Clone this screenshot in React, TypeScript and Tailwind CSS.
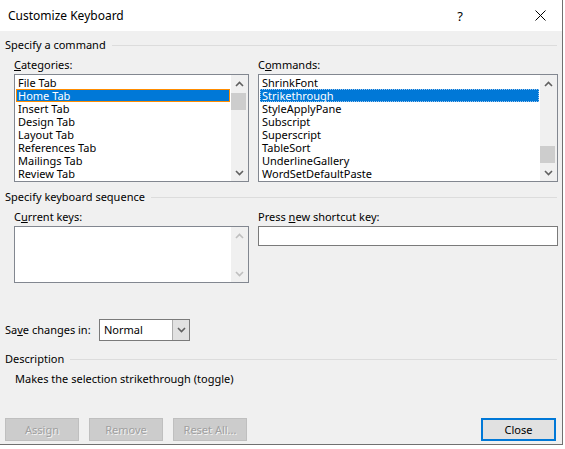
import React from 'react';

const categories = ['File Tab', 'Home Tab', 'Insert Tab', 'Design Tab', 'Layout Tab', 'References Tab', 'Mailings Tab', 'Review Tab'];
const commands = ['ShrinkFont', 'Strikethrough', 'StyleApplyPane', 'Subscript', 'Superscript', 'TableSort', 'UnderlineGallery', 'WordSetDefaultPaste'];

function Chevron({ up, color = '#606060' }: { up?: boolean; color?: string }) {
  return (
    <svg width="9" height="6" viewBox="0 0 9 6">
      <path d={up ? 'M1 5 L4.5 1.5 L8 5' : 'M1 1 L4.5 4.5 L8 1'} fill="none" stroke={color} strokeWidth="1.6" />
    </svg>
  );
}

function GroupHeader({ title, className }: { title: string; className?: string }) {
  return (
    <div className={`flex items-center h-4 ${className ?? ''}`}>
      <span className="pr-[6px]">{title}</span>
      <div className="flex-1 h-px bg-[#dcdcdc]" />
    </div>
  );
}

function Scrollbar({ thumbTop, disabled }: { thumbTop?: number; disabled?: boolean }) {
  const c = disabled ? '#bfbfbf' : '#606060';
  return (
    <div className="w-[17px] bg-[#f0f0f0] flex flex-col relative">
      <div className="h-[17px] flex items-center justify-center"><Chevron up color={c} /></div>
      <div className="flex-1" />
      <div className="h-[17px] flex items-center justify-center"><Chevron color={c} /></div>
      {thumbTop !== undefined && (
        <div className="absolute left-0 w-[15px] h-[17px] bg-[#cdcdcd]" style={{ top: thumbTop }} />
      )}
    </div>
  );
}

function ListBox({ items, selected, focus, thumbTop, width }: { items: string[]; selected: number; focus: 'solid' | 'dotted'; thumbTop: number; width: string }) {
  return (
    <div className={`${width} h-[108px] border border-[#828790] bg-white flex`}>
      <div className="flex-1 pt-px pl-px pr-px overflow-hidden">
        {items.map((item, i) => (
          <div
            key={item}
            className={
              i === selected
                ? focus === 'solid'
                  ? 'h-[13px] leading-[11px] pl-[1px] bg-[#0078d7] text-white border border-[#ff8c00]'
                  : 'h-[13px] leading-[11px] pl-[1px] bg-[#0078d7] text-white border border-dotted border-[#9fc6ee]'
                : 'h-[13px] leading-[13px] pl-[2px]'
            }
          >
            {item}
          </div>
        ))}
      </div>
      <Scrollbar thumbTop={thumbTop} />
    </div>
  );
}

function Btn({ label, primary }: { label: string; primary?: boolean }) {
  return primary ? (
    <div className="w-[75px] h-[23px] border-2 border-[#0078d7] bg-[#e1e1e1] flex items-center justify-center">{label}</div>
  ) : (
    <div className="w-[74px] h-[23px] border border-[#bfbfbf] bg-[#cccccc] flex items-center justify-center text-[#a0a0a0] [text-shadow:1px_1px_0_#f4f4f4]">{label}</div>
  );
}

export default function App() {
  return (
    <div className="w-[565px] h-[449px] bg-white text-[11px] leading-4 text-black font-['Segoe_UI','Noto_Sans',sans-serif] overflow-hidden">
      <div className="w-[563px] h-[445px] bg-[#f0f0f0] border-r border-b border-[#707070] flex flex-col">
        {/* title bar */}
        <div className="h-[31px] bg-white flex items-center pl-2 shrink-0 text-[12px]">
          <span className="flex-1">Customize Keyboard</span>
          <span className="w-[16px] text-center text-[13px]">?</span>
          <div className="w-[16px] ml-[64px] mr-[14px] flex justify-center">
            <svg width="11" height="11" viewBox="0 0 11 11">
              <path d="M0.5 0.5 L10.5 10.5 M10.5 0.5 L0.5 10.5" stroke="#000" strokeWidth="1" />
            </svg>
          </div>
        </div>

        <div className="px-[5px] flex flex-col">
          <GroupHeader title="Specify a command" className="mt-[6px]" />

          <div className="flex ml-[9px] gap-[9px] mt-1">
            <div className="flex flex-col">
              <div className="h-4"><span className="underline">C</span>ategories:</div>
              <div className="mt-px">
                <ListBox items={categories} selected={1} focus="solid" thumbTop={18} width="w-[235px]" />
              </div>
            </div>
            <div className="flex flex-col">
              <div className="h-4">C<span className="underline">o</span>mmands:</div>
              <div className="mt-px">
                <ListBox items={commands} selected={1} focus="dotted" thumbTop={71} width="w-[300px]" />
              </div>
            </div>
          </div>

          <GroupHeader title="Specify keyboard sequence" className="mt-[7px]" />

          <div className="flex ml-[9px] gap-[9px] mt-1">
            <div className="flex flex-col">
              <div className="h-4">C<span className="underline">u</span>rrent keys:</div>
              <div className="mt-px w-[235px] h-[57px] border border-[#828790] bg-white flex justify-end">
                <Scrollbar disabled />
              </div>
            </div>
            <div className="flex flex-col">
              <div className="h-4">Press <span className="underline">n</span>ew shortcut key:</div>
              <div className="mt-px w-[300px] h-[20px] border border-[#7a7a7a] bg-white" />
            </div>
          </div>

          <div className="flex items-center mt-[36px] h-[22px]">
            <span className="w-[94px]">Sa<span className="underline">v</span>e changes in:</span>
            <div className="w-[91px] h-[22px] border border-[#7a7a7a] bg-white flex">
              <span className="flex-1 pl-1 leading-[20px]">Normal</span>
              <div className="w-[17px] bg-[#e1e1e1] border-l border-[#adadad] flex items-center justify-center">
                <Chevron color="#606060" />
              </div>
            </div>
          </div>

          <GroupHeader title="Description" className="mt-[10px]" />
          <div className="ml-[10px] mt-1 h-4">Makes the selection strikethrough (toggle)</div>

          <div className="flex mt-[31px]">
            <div className="flex gap-[10px]">
              <Btn label="Assign" />
              <Btn label="Remove" />
              <Btn label="Reset All..." />
            </div>
            <div className="flex-1" />
            <div className="mr-px"><Btn label="Close" primary /></div>
          </div>
        </div>
      </div>
    </div>
  );
}
